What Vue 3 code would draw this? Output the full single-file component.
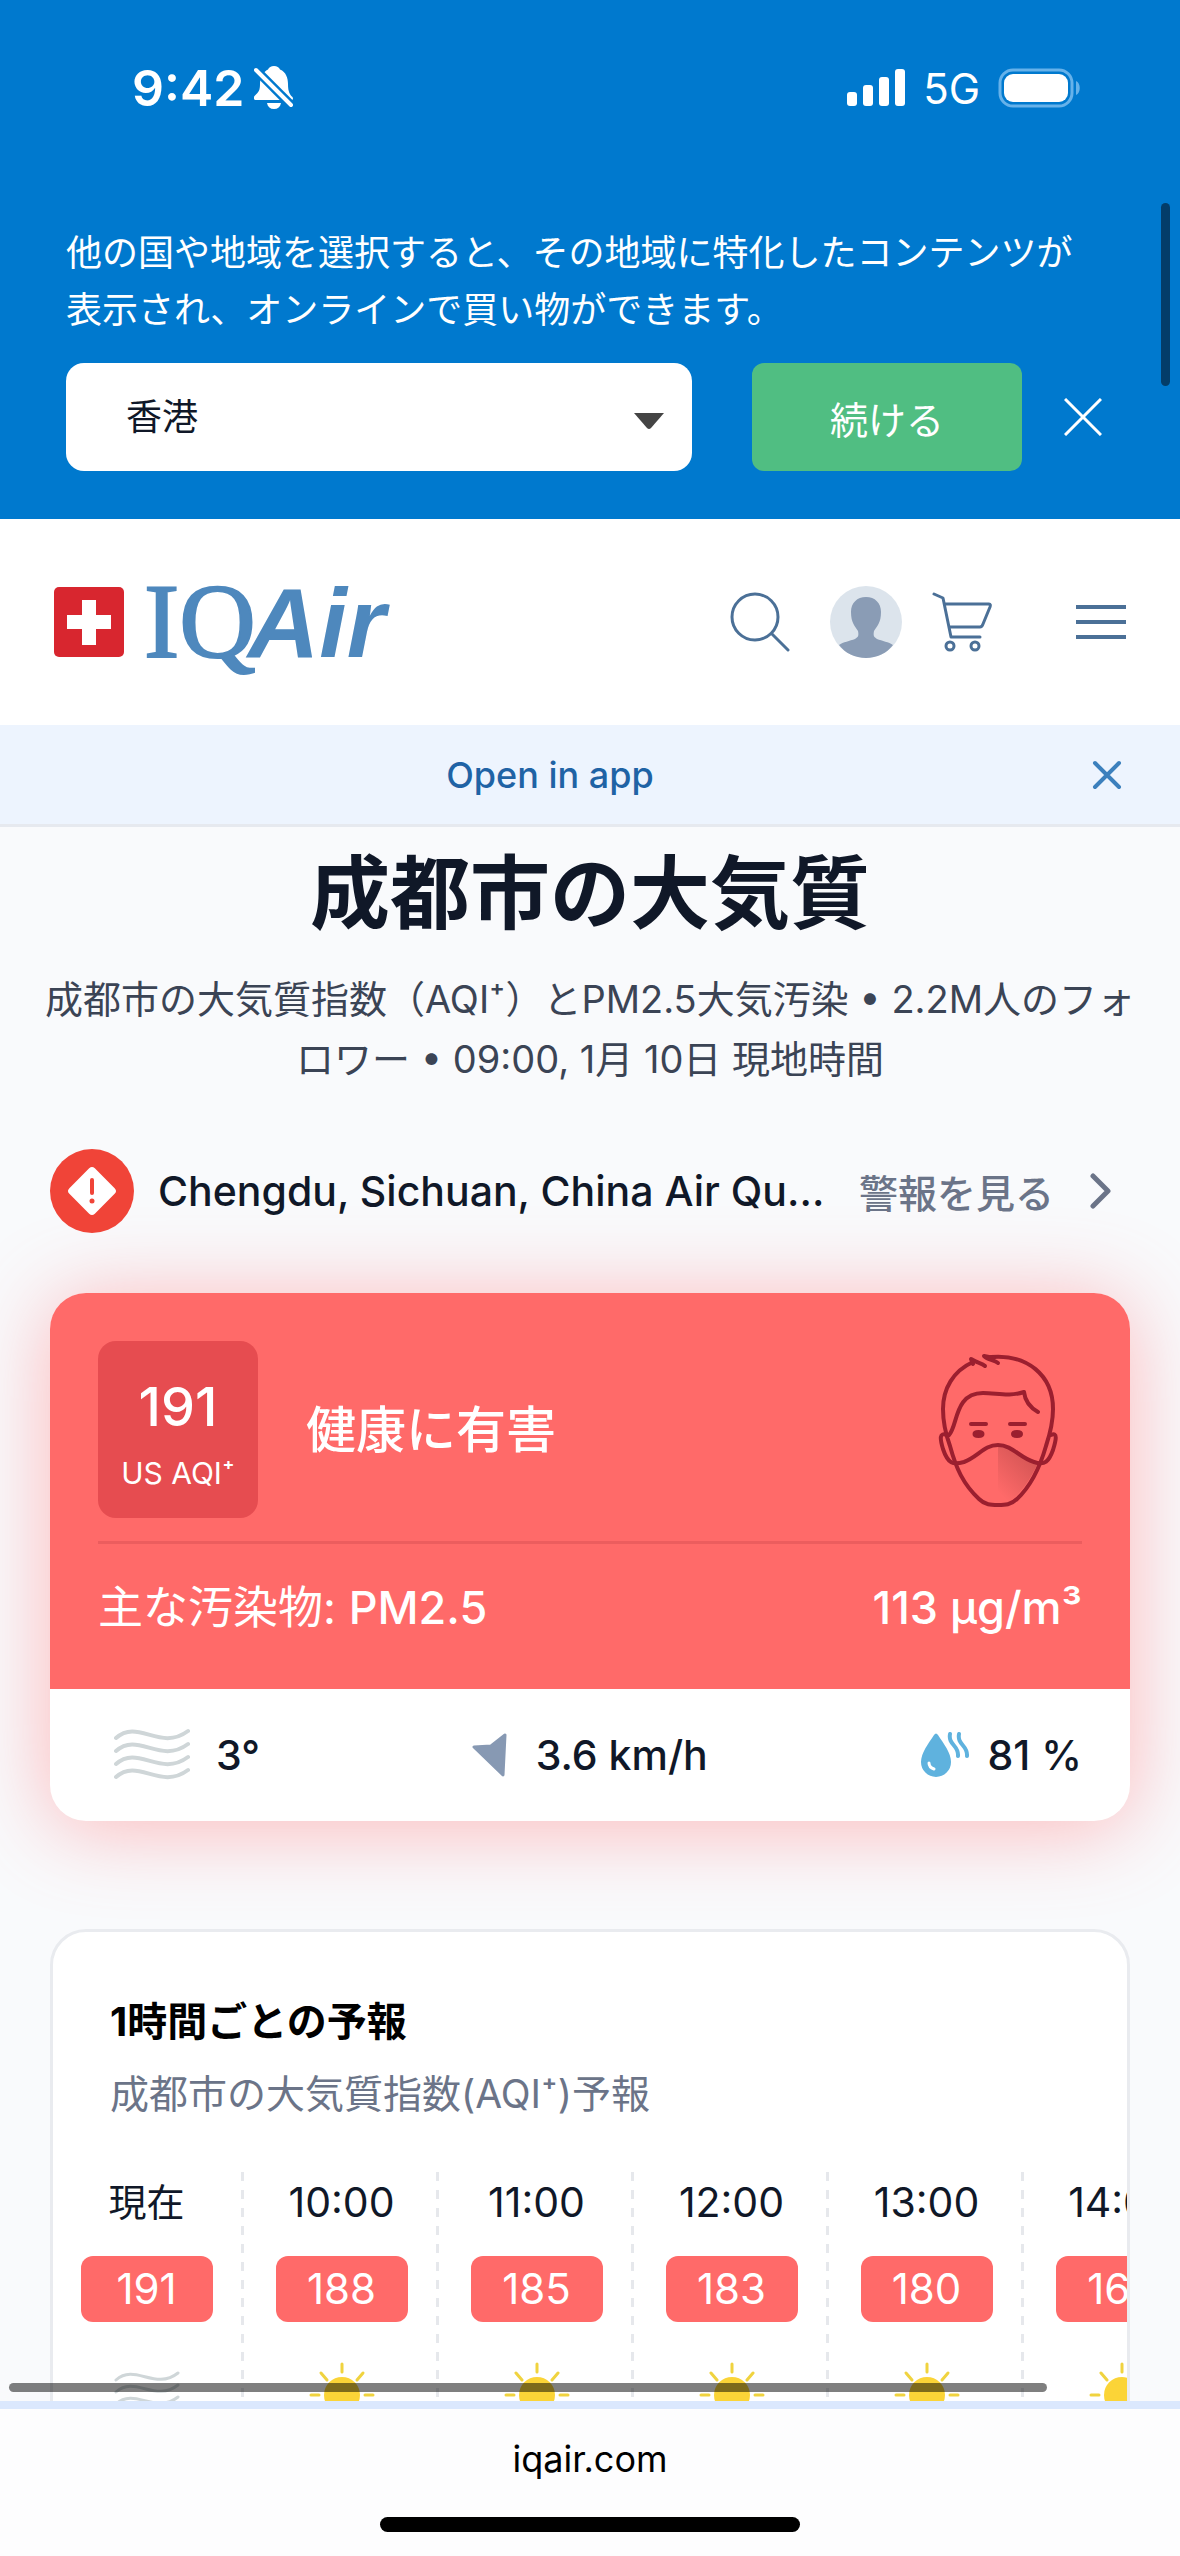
<script setup>
import { ref } from 'vue'

const country = ref('hk')

const hours = [
  { time: '現在', aqi: 191, icon: 'fog' },
  { time: '10:00', aqi: 188, icon: 'sun' },
  { time: '11:00', aqi: 185, icon: 'sun' },
  { time: '12:00', aqi: 183, icon: 'sun' },
  { time: '13:00', aqi: 180, icon: 'sun' },
  { time: '14:00', aqi: 165, icon: 'sun' },
]
</script>

<template>
  <div class="screen">
    <div class="region">
      <div class="status">
        <div class="clock">
          <span class="time">9:42</span>
          <svg width="42" height="44" viewBox="0 0 42 44" aria-hidden="true">
            <path d="M20 0c3 0 5 1.500 6 3.500C32 6 34 12 34 18c0 8 2 11 4.500 13 1 2 .5 3-1.500 3H2c-2 0-3-2-1.500-4C5 26 6 24 6 18 6 12 9 6 14 3.500 15 1.500 17 0 20 0z" fill="#fff" />
            <path d="M13 37h14c-.8 4-3.200 6-7 6s-6.200-2-7-6z" fill="#fff" />
            <path d="M1 3L38 40" stroke="#0079ce" stroke-width="9" />
            <path d="M2 4L37 39" stroke="#fff" stroke-width="4" stroke-linecap="round" />
          </svg>
        </div>
        <div class="signal">
          <svg width="58" height="38" viewBox="0 0 58 38" fill="#fff" aria-hidden="true">
            <rect x="0" y="23" width="10" height="14" rx="3" />
            <rect x="16" y="16" width="10" height="21" rx="3" />
            <rect x="32" y="8" width="10" height="29" rx="3" />
            <rect x="48" y="0" width="10" height="37" rx="3" />
          </svg>
          <span class="network">5G</span>
          <svg width="84" height="40" viewBox="0 0 84 40" aria-hidden="true">
            <rect x="2" y="2" width="72" height="36" rx="13" fill="none" stroke="#66b2ea" stroke-width="3" />
            <rect x="6" y="6" width="64" height="28" rx="9" fill="#fff" />
            <path d="M78 13c5 2 5 12 0 14z" fill="#66b2ea" />
          </svg>
        </div>
      </div>
      <form class="picker" @submit.prevent>
        <label class="notice" for="country">他の国や地域を選択すると、その地域に特化したコンテンツが表示され、オンラインで買い物ができます。</label>
        <div class="picker-row">
          <div class="select-wrap">
            <select id="country" v-model="country">
              <option value="hk">香港</option>
            </select>
            <svg class="caret" width="30" height="17" viewBox="0 0 30 17" aria-hidden="true">
              <path d="M0 0h30L17 15q-2 2-4 0z" fill="#444" />
            </svg>
          </div>
          <button class="continue" type="submit">続ける</button>
          <button class="dismiss" type="button" aria-label="閉じる">
            <svg width="38" height="38" viewBox="0 0 38 38" aria-hidden="true">
              <path d="M1 1l36 36M37 1L1 37" stroke="#fff" stroke-width="3" />
            </svg>
          </button>
        </div>
      </form>
      <div class="page-thumb"></div>
    </div>

    <header class="site-header">
      <a class="logo" href="#">
        <svg width="70" height="70" viewBox="0 0 70 70" aria-hidden="true">
          <rect width="70" height="70" rx="5" fill="#d8262f" />
          <path d="M28 13h14v15h15v14H42v16H28V42H13V28h15z" fill="#fff" />
        </svg>
        <span class="word"><span class="iq">IQ</span><span class="air">Air</span></span>
      </a>
      <nav class="tools">
        <button type="button" aria-label="検索">
          <svg width="60" height="60" viewBox="0 0 60 60" fill="none" stroke="#4b7097" stroke-width="3" stroke-linecap="round" aria-hidden="true">
            <circle cx="25" cy="25" r="23" />
            <path d="M42 42l16 16" />
          </svg>
        </button>
        <button class="account" type="button" aria-label="アカウント">
          <svg width="72" height="72" viewBox="0 0 72 72" aria-hidden="true">
            <circle cx="36" cy="36" r="36" fill="#dce4ec" />
            <path d="M36 11c9 0 15 6 15 15 0 11-4 14-7 19-1 5 0 6 3 8 5 2 12 3 16 6-6 8-16 13-27 13S15 67 9 59c4-3 11-4 16-6 3-2 4-3 3-8-3-5-7-8-7-19 0-9 6-15 15-15z" fill="#8a9cb5" />
          </svg>
        </button>
        <button type="button" aria-label="カート">
          <svg width="60" height="60" viewBox="0 0 60 60" fill="none" stroke="#4b7097" stroke-width="3" stroke-linecap="round" stroke-linejoin="round" aria-hidden="true">
            <path d="M2 2l9 4 8 39h29M13 12h44q2 0 1 3l-7 17q-1 3-3 3H17" />
            <circle cx="18" cy="54" r="4" />
            <circle cx="43" cy="54" r="4" />
          </svg>
        </button>
        <button class="menu" type="button" aria-label="メニュー">
          <svg width="50" height="34" viewBox="0 0 50 34" stroke="#4b7097" stroke-width="4" aria-hidden="true">
            <path d="M0 2h50M0 17h50M0 32h50" />
          </svg>
        </button>
      </nav>
    </header>

    <div class="app-bar">
      <a href="#">Open in app</a>
      <button type="button" aria-label="閉じる">
        <svg width="30" height="30" viewBox="0 0 30 30" aria-hidden="true">
          <path d="M3 3l24 24M27 3L3 27" stroke="#3c80bd" stroke-width="4" stroke-linecap="round" />
        </svg>
      </button>
    </div>

    <main>
      <h1>成都市の大気質</h1>
      <p class="summary">成都市の大気質指数（AQI⁺）とPM2.5大気汚染 • 2.2M人のフォロワー • 09:00, 1月 10日 現地時間</p>

      <a class="alert" href="#">
        <svg width="84" height="84" viewBox="0 0 84 84" aria-hidden="true">
          <circle cx="42" cy="42" r="42" fill="#f04438" />
          <rect x="24" y="24" width="36" height="36" rx="4" transform="rotate(45 42 42)" fill="#fff" />
          <path d="M42 31v13" stroke="#f04438" stroke-width="4" stroke-linecap="round" />
          <circle cx="42" cy="52" r="2.500" fill="#f04438" />
        </svg>
        <span class="alert-title">Chengdu, Sichuan, China Air Qu...</span>
        <span class="alert-more">警報を見る</span>
        <svg class="chevron" width="22" height="36" viewBox="0 0 22 36" aria-hidden="true">
          <path d="M3 3l15 15L3 33" fill="none" stroke="#6b7488" stroke-width="5" stroke-linecap="round" stroke-linejoin="round" />
        </svg>
      </a>

      <section class="aqi-card">
        <div class="aqi-main">
          <div class="aqi-head">
            <div class="badge">
              <strong>191</strong>
              <span>US AQI⁺</span>
            </div>
            <p class="level">健康に有害</p>
            <svg class="face" width="120" height="154" viewBox="38 31 120 154" fill="none" stroke="#9b1f2f" stroke-width="4" stroke-linecap="round" stroke-linejoin="round" aria-hidden="true">
              <defs>
                <linearGradient id="maskShade" x1="1" y1="0" x2="0.300" y2="1">
                  <stop offset="0" stop-color="#b24444" stop-opacity="0.700" />
                  <stop offset="1" stop-color="#b24444" stop-opacity="0" />
                </linearGradient>
              </defs>
              <path d="M98 123c14 1 24 14 40 18-7 15-14 26-25 36q-7 5-15 5z" fill="url(#maskShade)" stroke="none" />
              <path d="M73 40C53 49 43 67 43 87c0 13 3 26 7 37 6 22 13 38 29 53 6 6 12 6 19 6s13 0 19-6c15-14 23-32 29-53 4-12 7-25 7-37 0-34-26-55-62-52" />
              <path d="M85 44c-3-3-8-3-14-7l2 5M98 41c-4-3-10-3-14-7l10 2" />
              <path d="M49 113c9-9 5-42 34-42 14 0 26 4 41-1 1 9 7 16 14 20" />
              <path d="M71 102h15M110 102h15" />
              <ellipse cx="78.500" cy="112" rx="4" ry="2" fill="#9b1f2f" />
              <ellipse cx="117" cy="112" rx="4" ry="2" fill="#9b1f2f" />
              <path d="M47 113c-8-3-7 4-4 14 5 15 10 16 21 13 14-5 20-17 34-17s22 13 36 17c11 4 15-1 19-12 3-10 5-18-2-15" />
            </svg>
          </div>
          <div class="pollutant">
            <span>主な汚染物: <b>PM2.5</b></span>
            <b>113 µg/m³</b>
          </div>
        </div>
        <div class="weather">
          <span class="metric">
            <svg class="fog" width="76" height="54" viewBox="0 0 76 54" fill="none" stroke="#cfd6d8" stroke-width="4" stroke-linecap="round" aria-hidden="true">
              <path d="M2 10C24-10 46 24 74 3M2 23C24 3 46 37 74 16M2 36C24 16 46 50 74 29M2 49C24 29 46 63 74 42" />
            </svg>
            3°
          </span>
          <span class="metric">
            <svg class="wind" width="36" height="44" viewBox="0 0 36 44" aria-hidden="true">
              <path d="M33 2L31 42 2 14l17-1z" fill="#8799b3" stroke="#8799b3" stroke-width="3" stroke-linejoin="round" />
            </svg>
            3.6 km/h
          </span>
          <span class="metric">
            <svg width="52" height="46" viewBox="0 0 52 46" fill="none" aria-hidden="true">
              <path d="M14 3q2-3 4 0c6 9 13 18 13 27a15 15 0 0 1-30 0C1 21 8 12 14 3z" fill="#5fb2de" />
              <path d="M9 31c0 3 2 5 5 6" stroke="#fff" stroke-width="3" stroke-linecap="round" />
              <path d="M30 2c-2 11 9 11 8 22M39 2c-2 11 9 11 8 22" stroke="#5fb2de" stroke-width="4" stroke-linecap="round" />
            </svg>
            81 %
          </span>
        </div>
      </section>

      <section class="forecast">
        <h2>1時間ごとの予報</h2>
        <p>成都市の大気質指数(AQI⁺)予報</p>
        <ol class="hours">
          <li v-for="h in hours" :key="h.time">
            <time>{{ h.time }}</time>
            <span class="pill">{{ h.aqi }}</span>
            <svg v-if="h.icon === 'fog'" width="66" height="66" viewBox="0 0 66 66" fill="none" stroke="#cfd6d8" stroke-width="3" stroke-linecap="round" aria-hidden="true">
              <path d="M2 18C21 1 41 29 64 11M2 30C21 13 41 41 64 23M2 42C21 25 41 53 64 35M2 54C21 37 41 65 64 47" />
            </svg>
            <svg v-else width="66" height="66" viewBox="0 0 66 66" stroke="#f0d33f" stroke-width="3" stroke-linecap="round" aria-hidden="true">
              <circle cx="33" cy="33" r="18" fill="#fbd437" stroke="none" />
              <path d="M33 2v8M33 56v8M2 33h8M56 33h8M12 11l6 7M54 11l-6 7M12 55l6-7M54 55l-6-7" />
            </svg>
          </li>
        </ol>
      </section>
    </main>

    <footer class="browser-bar">
      <div class="row-thumb"></div>
      <span>iqair.com</span>
      <div class="home-indicator"></div>
    </footer>
  </div>
</template>

<style>
body {
  margin: 0;
}
</style>

<style scoped>
.screen {
  display: flex;
  flex-direction: column;
  height: 100vh;
  overflow: hidden;
  background: #f9fafc;
  color: #101828;
  font-family: Inter, "Noto Sans CJK JP", sans-serif;
  font-size: 41px;
}
.screen * {
  box-sizing: border-box;
}
button {
  display: flex;
  align-items: center;
  justify-content: center;
  padding: 0;
  border: 0;
  background: none;
  font: inherit;
}
a {
  color: inherit;
  text-decoration: none;
}
svg {
  display: block;
  flex: none;
}
h1,
h2,
p,
ol {
  margin: 0;
}

.region {
  position: relative;
  flex: none;
  padding: 56px 66px 48px;
  background: #0079ce;
  color: #fff;
}
.status {
  display: flex;
  align-items: center;
  justify-content: space-between;
  height: 64px;
  margin-bottom: 105px;
  padding: 0 32px 0 66px;
}
.clock,
.signal {
  display: flex;
  align-items: center;
}
.clock {
  gap: 10px;
}
.time {
  font-size: 50px;
  font-weight: 600;
}
.network {
  margin: 0 18px;
  font-size: 42px;
}
.notice {
  display: block;
  margin-bottom: 24px;
  padding-right: 24px;
  font-size: 36px;
  line-height: 57px;
}
.picker-row {
  display: flex;
  align-items: center;
}
.select-wrap {
  position: relative;
  flex: 1;
  margin-right: 60px;
}
select {
  display: block;
  width: 100%;
  height: 108px;
  padding: 0 60px;
  border: 0;
  border-radius: 18px;
  appearance: none;
  background: #fff;
  color: #101828;
  font: inherit;
  font-size: 36px;
}
.caret {
  position: absolute;
  top: 50px;
  right: 28px;
  pointer-events: none;
}
.continue {
  width: 270px;
  height: 108px;
  border-radius: 12px;
  background: #50be82;
  color: #fff;
  font-size: 38px;
}
.dismiss {
  margin: 0 12px 0 42px;
}
.page-thumb {
  position: absolute;
  top: 203px;
  right: 10px;
  width: 9px;
  height: 183px;
  border-radius: 5px;
  background: #033d69;
}

.site-header {
  display: flex;
  flex: none;
  align-items: center;
  justify-content: space-between;
  height: 206px;
  padding: 0 54px;
  background: #fff;
}
.logo {
  display: flex;
  align-items: center;
  gap: 20px;
  color: #4e88bd;
}
.word {
  display: flex;
  align-items: baseline;
  line-height: 108px;
}
.iq {
  font-family: "Liberation Serif", serif;
  font-size: 106px;
  -webkit-text-stroke: 2px #4e88bd;
}
.air {
  margin-left: -8px;
  font-family: "Liberation Sans", sans-serif;
  font-size: 99px;
  font-style: italic;
  font-weight: 700;
}
.tools {
  display: flex;
  align-items: center;
  gap: 30px;
}
.account {
  margin-left: 10px;
}
.menu {
  margin-left: 54px;
}

.app-bar {
  display: flex;
  flex: none;
  align-items: center;
  height: 102px;
  padding-right: 58px;
  border-bottom: 3px solid #e6e9ef;
  background: #edf4fe;
}
.app-bar a {
  flex: 1;
  padding-left: 8px;
  color: #1f63a5;
  font-size: 36px;
  font-weight: 500;
  text-align: center;
}

main {
  flex: 1;
  min-height: 0;
  padding: 0 50px;
}
h1 {
  margin-top: 18px;
  font-size: 80px;
  font-weight: 700;
  line-height: 96px;
  text-align: center;
}
.summary {
  margin: 28px -8px 0;
  color: #3b4455;
  font-size: 38px;
  line-height: 60px;
  text-align: center;
}
.alert {
  display: flex;
  align-items: center;
  height: 84px;
  margin-top: 60px;
}
.alert-title {
  flex: 1;
  margin-left: 24px;
  font-weight: 500;
  white-space: nowrap;
}
.alert-more {
  color: #6b7488;
  font-size: 39px;
  font-weight: 500;
}
.chevron {
  margin: 0 18px 0 36px;
}

.aqi-card {
  margin-top: 60px;
  overflow: hidden;
  border-radius: 36px;
  background: #fff;
  box-shadow: 0 6px 84px rgba(255, 100, 105, 0.45);
}
.aqi-main {
  padding: 48px;
  background: #ff6a69;
  color: #fff;
}
.aqi-head {
  display: flex;
  align-items: center;
  padding-bottom: 23px;
  border-bottom: 3px solid #ec5d5e;
}
.badge {
  display: flex;
  flex-direction: column;
  align-items: center;
  justify-content: center;
  gap: 14px;
  width: 160px;
  height: 177px;
  padding-top: 8px;
  border-radius: 18px;
  background: #e64c50;
}
.badge strong {
  font-size: 54px;
  font-weight: 500;
  line-height: 64px;
}
.badge span {
  font-size: 30px;
  line-height: 40px;
}
.level {
  flex: 1;
  margin-left: 48px;
  padding-bottom: 8px;
  font-size: 50px;
  font-weight: 500;
}
.face {
  margin-right: 24px;
}
.pollutant {
  display: flex;
  justify-content: space-between;
  padding-top: 31px;
  font-size: 45px;
  line-height: 66px;
}
.pollutant b {
  font-weight: 500;
}
.weather {
  display: flex;
  align-items: center;
  justify-content: space-between;
  height: 132px;
  padding: 0 48px 0 64px;
  font-weight: 500;
}
.metric {
  display: flex;
  align-items: center;
  gap: 16px;
}
.fog {
  margin-right: 10px;
}
.wind {
  margin-right: 12px;
}

.forecast {
  margin-top: 108px;
  overflow: hidden;
  border: 3px solid #e9ebef;
  border-radius: 36px;
  background: #fff;
}
h2 {
  margin: 60px 57px 0;
  color: #000;
  font-size: 40px;
  font-weight: 700;
  line-height: 60px;
}
.forecast p {
  margin: 12px 57px 0;
  color: #6b7488;
  font-size: 39px;
  line-height: 60px;
}
.hours {
  display: flex;
  margin: 48px 0 0 -4px;
  padding: 0;
  list-style: none;
}
.hours li {
  display: flex;
  flex: none;
  flex-direction: column;
  align-items: center;
  width: 195px;
  height: 300px;
  background: repeating-linear-gradient(#e6e8ec 0 9px, transparent 9px 18px) right / 3px 100% no-repeat;
}
.hours time {
  line-height: 60px;
}
.hours li:first-child time {
  font-size: 38px;
}
.pill {
  width: 132px;
  margin: 24px 0 40px;
  border-radius: 12px;
  background: #ff6a69;
  color: #fff;
  font-size: 42px;
  line-height: 66px;
  text-align: center;
}

.browser-bar {
  position: relative;
  display: flex;
  flex: none;
  flex-direction: column;
  align-items: center;
  gap: 32px;
  padding: 24px 0;
  border-top: 8px solid #dbe8fd;
  background: #fdfdfe;
  color: #000;
  font-size: 36px;
  line-height: 52px;
}
.row-thumb {
  position: absolute;
  top: -26px;
  left: 9px;
  width: 88%;
  height: 9px;
  border-radius: 5px;
  background: rgba(0, 0, 0, 0.5);
}
.home-indicator {
  width: 420px;
  height: 15px;
  border-radius: 8px;
  background: #000;
}
</style>
